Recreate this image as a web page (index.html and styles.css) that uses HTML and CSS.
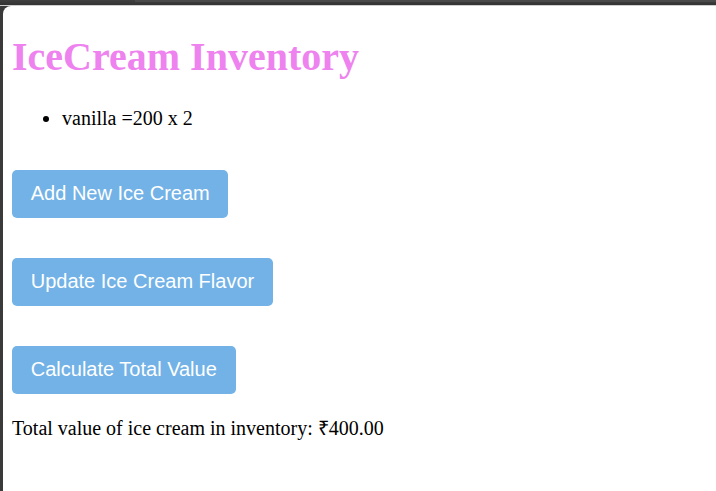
FILE: index.html
```html
<!DOCTYPE html>
<html lang="en">
<head>
<meta charset="utf-8">
<title>IceCream Inventory</title>
<link rel="stylesheet" href="styles.css">
</head>
<body>
<div class="chrome">
  <div class="chrome-tab"></div>
</div>
<div class="window">
  <h1 class="title">IceCream Inventory</h1>
  <ul class="list">
    <li>vanilla =200 x 2</li>
  </ul>
  <div class="actions">
    <button class="btn">Add New Ice Cream</button>
    <button class="btn">Update Ice Cream Flavor</button>
    <button class="btn">Calculate Total Value</button>
  </div>
  <p class="total">Total value of ice cream in inventory: ₹400.00</p>
</div>
</body>
</html>
```
FILE: styles.css
```css
html, body {
  margin: 0;
  padding: 0;
}
body {
  background: #3a3a3a;
  width: 716px;
  height: 491px;
  overflow: hidden;
  display: flex;
  flex-direction: column;
}
.chrome {
  height: 6px;
  flex: none;
  position: relative;
  background: linear-gradient(#404040, #333);
  border-bottom: 1px solid #cfcfcf;
  box-sizing: border-box;
}
.chrome-tab {
  position: absolute;
  left: 135px;
  right: 0;
  top: 0;
  height: 2px;
  background: #4a4a4a;
}
.window {
  flex: 1;
  margin-left: 3px;
  background: #fff;
  border-top-left-radius: 8px;
  padding: 0.1px 10px 0 9px;
  font-family: "Liberation Serif", "Times New Roman", serif;
  font-size: 20px;
  color: #000;
}
.title {
  font-size: 40px;
  font-weight: bold;
  color: #ee82ee;
  margin: 26.8px 0;
}
.list {
  margin: 20px 0;
  padding-left: 50px;
}
.actions {
  display: flex;
  flex-direction: column;
  align-items: flex-start;
  gap: 40px;
  margin-top: 40px;
}
.btn {
  font-family: "Liberation Sans", Arial, sans-serif;
  font-size: 20px;
  line-height: 23px;
  padding: 12.5px 18.75px;
  border: none;
  border-radius: 5px;
  background: #72b2e6;
  color: #fff;
}
.total {
  margin: 20px 0 0;
}
```
